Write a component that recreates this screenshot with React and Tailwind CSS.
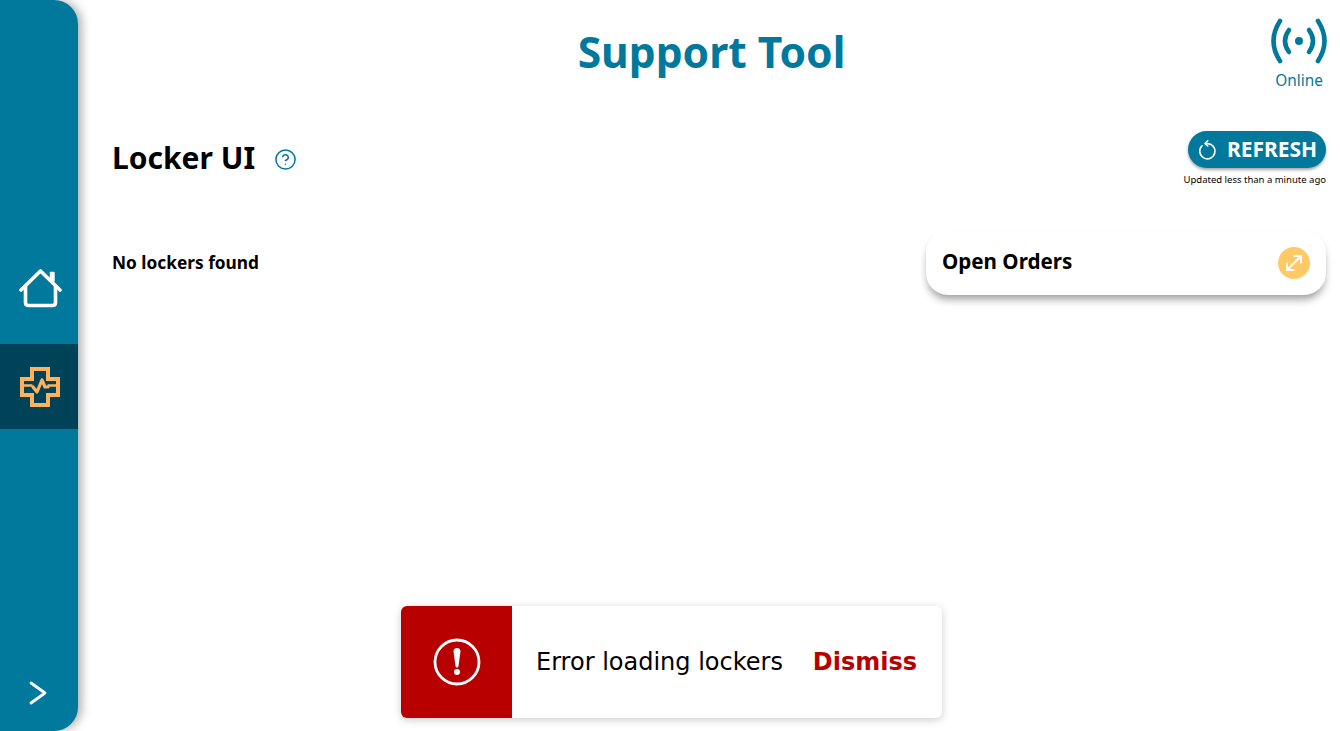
import React from 'react';
import { CircleHelp } from 'lucide-react';

const bodyFont = "font-['Noto_Sans','Open_Sans',sans-serif]";

function HomeIcon() {
  return (
    <svg width="44" height="40" viewBox="0 0 44 40" fill="none" stroke="white" strokeWidth="3.6" strokeLinecap="round" strokeLinejoin="round">
      <path d="M2 21 L21.5 2 L41 21" />
      <path d="M6.5 17.5 V33.5 Q6.5 36.5 9.5 36.5 H33.5 Q36.5 36.5 36.5 33.5 V17.5" />
      <path d="M31.5 3.5 H35 V12 L31.5 9 Z" fill="white" strokeWidth="1.4" />
    </svg>
  );
}

function HealthIcon() {
  return (
    <svg width="40" height="40" viewBox="0 0 40 40" fill="none" stroke="#FFB259" strokeWidth="4">
      <path d="M12 2 H28 V12 H38 V28 H28 V38 H12 V28 H2 V12 H12 Z" />
      <path d="M2 18.5 H12.5 M27.5 18.5 H38" strokeWidth="2.6" />
      <path d="M13 20 L17 25 L22 13 L25 20 L28 20" strokeWidth="3.2" strokeLinecap="round" strokeLinejoin="round" />
    </svg>
  );
}

function SignalIcon() {
  return (
    <svg width="58" height="46" viewBox="0 0 58 46" fill="none" stroke="#00799D" strokeWidth="4.6" strokeLinecap="round">
      <circle cx="29" cy="23" r="4" fill="#00799D" stroke="none" />
      <path d="M19 12 Q11 23 19 34" />
      <path d="M39 12 Q47 23 39 34" />
      <path d="M10 3 Q-3 23 10 43" />
      <path d="M48 3 Q61 23 48 43" />
    </svg>
  );
}

function RefreshIcon() {
  return (
    <svg width="20" height="22" viewBox="0 0 20 22" fill="none" stroke="white" strokeWidth="1.6" strokeLinecap="round" strokeLinejoin="round">
      <path d="M5 6.8 A7.6 7.6 0 1 0 10 4.6" />
      <path d="M10.8 1.8 L8 4.6 L10.8 7" />
    </svg>
  );
}

function ExpandIcon() {
  return (
    <svg width="20" height="20" viewBox="0 0 20 20" fill="none" stroke="white" strokeWidth="2" strokeLinecap="round" strokeLinejoin="round">
      <path d="M3 17 L17 3" />
      <path d="M10.5 3 H17 V9.5" />
      <path d="M3 10.5 V17 H9.5" />
    </svg>
  );
}

function AlertIcon() {
  return (
    <svg width="48" height="48" viewBox="0 0 48 48" fill="none">
      <circle cx="24" cy="24" r="22" stroke="white" strokeWidth="2.8" />
      <path d="M20.5 13.5 a3.5 3.5 0 0 1 7 0 L25.5 28 a1.5 1.5 0 0 1 -3 0 Z" fill="white" />
      <circle cx="24" cy="34" r="3" fill="white" />
    </svg>
  );
}

function ChevronIcon() {
  return (
    <svg width="18" height="24" viewBox="0 0 18 24" fill="none" stroke="white" strokeWidth="2.8" strokeLinecap="round" strokeLinejoin="round">
      <path d="M2 2 L16 12 L2 22" />
    </svg>
  );
}

function Sidebar() {
  return (
    <aside className="flex h-[731px] w-[78px] shrink-0 flex-col rounded-r-[24px] bg-[#00799D] shadow-[4px_0_10px_rgba(0,0,0,0.3)]">
      <div className="mt-[246px] flex h-[85px] items-center justify-center pt-[1px] pl-[3px]">
        <HomeIcon />
      </div>
      <div className="mt-[13px] flex h-[85px] items-center justify-center bg-[#004359] pl-[2px]">
        <HealthIcon />
      </div>
      <div className="mt-auto mb-[26px] flex justify-center pr-[2px]">
        <ChevronIcon />
      </div>
    </aside>
  );
}

export default function App() {
  return (
    <div className={`relative flex h-[731px] w-[1340px] overflow-hidden bg-white ${bodyFont}`}>
      <Sidebar />
      <main className="flex flex-1 flex-col pl-[34px] pr-[14px]">
        <header className="relative h-[131px]">
          <h1 className="pt-[23px] pr-[15px] text-center text-[42.6px] leading-[56px] font-bold text-[#00799D]">Support Tool</h1>
          <div className="absolute top-[18px] right-[-2px] flex flex-col items-center">
            <SignalIcon />
            <span className="mt-[7px] text-[15.4px] leading-[20px] text-[#00799D]">Online</span>
          </div>
        </header>

        <section className="flex items-start justify-between">
          <div className="mt-[7px] flex items-center">
            <h2 className="text-[30px] leading-[40px] font-bold text-black">Locker UI</h2>
            <CircleHelp size={23} color="#00799D" strokeWidth={1.6} className="ml-[19px] mt-[2px]" />
          </div>
          <div className="flex flex-col items-end">
            <button className="flex h-[37px] w-[138px] items-center justify-center gap-[10px] rounded-full bg-[#00799D] text-[21px] leading-[35px] font-bold text-white shadow-[0_2px_3px_rgba(0,0,0,0.35)]">
              <RefreshIcon />
              REFRESH
            </button>
            <span className="mt-[5px] text-[9.5px] leading-[14px] text-black">Updated less than a minute ago</span>
          </div>
        </section>

        <section className="mt-[44px] flex items-start justify-between">
          <p className="mt-[20px] text-[17.3px] leading-[24px] font-bold text-black">No lockers found</p>
          <div className="flex h-[64px] w-[400px] items-center justify-between rounded-[22px] bg-white px-[16px] shadow-[0_6px_8px_-2px_rgba(0,0,0,0.4)]">
            <span className="pb-[4px] text-[20.6px] font-bold text-black">Open Orders</span>
            <span className="flex h-[32px] w-[32px] items-center justify-center rounded-full bg-[#FFC966]">
              <ExpandIcon />
            </span>
          </div>
        </section>
      </main>

      <div className="absolute top-[606px] left-[401px] flex h-[112px] w-[541px] items-center overflow-hidden rounded-[6px] bg-white font-['DejaVu_Sans',sans-serif] shadow-[0_2px_8px_rgba(0,0,0,0.2)]">
        <div className="flex h-full w-[111px] items-center justify-center bg-[#B90000]">
          <AlertIcon />
        </div>
        <span className="ml-[24px] text-[24px] text-black">Error loading lockers</span>
        <button className="ml-auto mr-[25px] text-[24px] font-bold text-[#B90000]">Dismiss</button>
      </div>
    </div>
  );
}
